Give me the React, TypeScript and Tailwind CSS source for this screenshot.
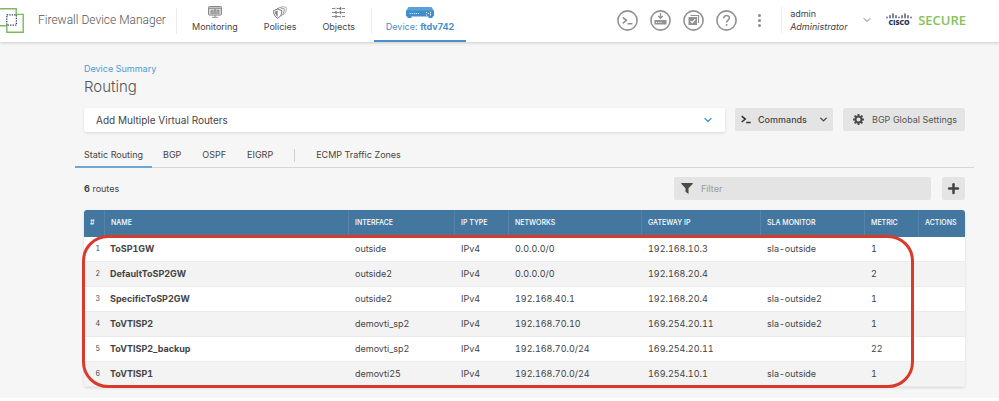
import type { ReactNode } from 'react'
import { ChevronDown, Plus } from 'lucide-react'

interface Route {
  name: string
  iface: string
  ipType: string
  network: string
  gateway: string
  sla: string
  metric: number
}

const routes: Route[] = [
  { name: 'ToSP1GW', iface: 'outside', ipType: 'IPv4', network: '0.0.0.0/0', gateway: '192.168.10.3', sla: 'sla-outside', metric: 1 },
  { name: 'DefaultToSP2GW', iface: 'outside2', ipType: 'IPv4', network: '0.0.0.0/0', gateway: '192.168.20.4', sla: '', metric: 2 },
  { name: 'SpecificToSP2GW', iface: 'outside2', ipType: 'IPv4', network: '192.168.40.1', gateway: '192.168.20.4', sla: 'sla-outside2', metric: 1 },
  { name: 'ToVTISP2', iface: 'demovti_sp2', ipType: 'IPv4', network: '192.168.70.10', gateway: '169.254.20.11', sla: 'sla-outside2', metric: 1 },
  { name: 'ToVTISP2_backup', iface: 'demovti_sp2', ipType: 'IPv4', network: '192.168.70.0/24', gateway: '169.254.20.11', sla: '', metric: 22 },
  { name: 'ToVTISP1', iface: 'demovti25', ipType: 'IPv4', network: '192.168.70.0/24', gateway: '169.254.10.1', sla: 'sla-outside', metric: 1 },
]

const columns = [
  { label: '#', width: 'w-5' },
  { label: 'NAME', width: '' },
  { label: 'INTERFACE', width: 'w-[106px]' },
  { label: 'IP TYPE', width: 'w-[54px]' },
  { label: 'NETWORKS', width: 'w-[133px]' },
  { label: 'GATEWAY IP', width: 'w-[119px]' },
  { label: 'SLA MONITOR', width: 'w-[104px]' },
  { label: 'METRIC', width: 'w-[54px]' },
  { label: 'ACTIONS', width: 'w-[47px]' },
]

const tabs = ['BGP', 'OSPF', 'EIGRP']

function ProductLogo() {
  return (
    <svg width="24" height="25" viewBox="0 0 24 25" fill="none" aria-hidden="true">
      <path d="M0 .8h16.2v5.6h7v17.8H6.8v-6.4H0" stroke="#7fb95f" strokeWidth="1.4" />
      <rect x="6.8" y="6.8" width="9.6" height="10.4" stroke="#2b3a63" strokeWidth="1.3" strokeDasharray="1.3 1.2" />
    </svg>
  )
}

function MonitoringIcon() {
  return (
    <svg width="14" height="12" viewBox="0 0 14 12" fill="none" aria-hidden="true">
      <rect x=".5" y=".5" width="13" height="8.6" rx=".8" fill="#d4d4d4" stroke="#8a8a8a" />
      <path d="M1 2.3h12M3.2 8V4.8h1.6V8M6.2 8V3.8h1.6V8M9.2 8V4.4h1.6V8" stroke="#777" strokeWidth=".8" />
      <path d="M7 9v2M4.2 11.3h5.6" stroke="#8a8a8a" />
    </svg>
  )
}

function PoliciesIcon() {
  return (
    <svg width="14" height="13" viewBox="0 0 14 13" fill="none" aria-hidden="true">
      <path d="M7.4 1.4 9.8.5l3.6 1.1c.1 3.3-.7 5.6-3.2 7.1" stroke="#999" strokeWidth=".8" />
      <path d="M4 2.7 6.9 1.6l4.3 1.3c.1 3.4-.9 5.9-3.3 7.4" stroke="#888" strokeWidth=".9" />
      <path d="M.6 4.5 4.7 3.1l4.1 1.4c.1 3.8-1.2 6.2-4.1 7.8C1.8 10.7.5 8.3.6 4.5Z" fill="#fff" stroke="#777" />
      <path d="M4.7 4.6v6.1C2.8 9.6 2 8 2 5.5Z" fill="#888" />
    </svg>
  )
}

function ObjectsIcon() {
  return (
    <svg width="13" height="11" viewBox="0 0 13 11" fill="none" aria-hidden="true">
      <path d="M0 1.5h3M5 1.5h3M10 1.5h3M0 5.500h3M5 5.500h2.500M9.500 5.500H13M0 9.500h3M5 9.500h3M10 9.500h3" stroke="#888" />
      <path d="M4 4.200v2.600M8.500 4.200v2.600M8.500 .2v2.600M4 8.200v2.600" stroke="#666" strokeWidth="1.500" />
      <path d="M4 .500v2M8.500 8.500v2" stroke="#999" strokeWidth=".8" />
    </svg>
  )
}

function DeviceIcon() {
  return (
    <svg width="28" height="11" viewBox="0 0 28 11" aria-hidden="true">
      <path d="M2.500 0h23L28 4H0Z" fill="#5ba0d6" />
      <rect y="3.500" width="28" height="6" rx=".8" fill="#3f8dca" />
      <path d="M1.500 9h4v2h-4zM22.500 9h4v2h-4z" fill="#3f8dca" />
      <path d="M3.500 6.500h10" stroke="#d5e9f7" strokeWidth="1" strokeDasharray="1.200 .9" />
      <path d="M20.500 5v1M20.500 7.500v1M24.500 4.800v1.500M24.500 7v1.500M22.500 6v1" stroke="#fff" strokeWidth="1" />
    </svg>
  )
}

function RoundIcon({ label, children }: { label: string; children: ReactNode }) {
  return (
    <button type="button" aria-label={label}>
      <svg width="21" height="21" viewBox="0 0 21 21" fill="none" stroke="#919191" strokeWidth="1.600" aria-hidden="true">
        <circle cx="10.500" cy="10.500" r="9.600" />
        {children}
      </svg>
    </button>
  )
}

function PromptIcon() {
  return (
    <svg width="10" height="9" viewBox="0 0 10 9" fill="none" stroke="#333" strokeWidth="1.500" aria-hidden="true">
      <path d="m.7 1.200 3.600 2.900L.7 7M5.200 7.500h4.500" />
    </svg>
  )
}

function GearIcon() {
  return (
    <svg width="11" height="11" viewBox="0 0 11 11" fill="none" stroke="#4a4a4a" aria-hidden="true">
      <circle cx="5.500" cy="5.500" r="3" strokeWidth="2" />
      <path d="M5.500 0v2M5.500 9v2M0 5.500h2M9 5.500h2M1.600 1.600 3 3M8 8l1.400 1.400M9.400 1.600 8 3M3 8 1.600 9.400" strokeWidth="1.900" />
    </svg>
  )
}

function CiscoLogo() {
  return (
    <span className="flex w-[26px] flex-col items-center">
      <svg width="26" height="6" viewBox="0 0 26 6" fill="none" stroke="#26335c" strokeWidth="1.200" strokeLinecap="round" aria-hidden="true">
        <path d="M1 4v.8M4 2.600v2.200M7 .8v4M10 2.600v2.200M13 4v.8M16 2.600v2.200M19 .8v4M22 2.600v2.200M25 4v.8" />
      </svg>
      <span className="font-['Open_Sans',sans-serif] text-[7px] leading-[8px] font-extrabold text-[#26335c]">CISCO</span>
    </span>
  )
}

function NavLink({ icon, children }: { icon: ReactNode; children: ReactNode }) {
  return (
    <a href="#" className="flex flex-col items-center">
      <span className="flex h-[15px] items-center">{icon}</span>
      <span className="leading-[14px] whitespace-nowrap">{children}</span>
    </a>
  )
}

function Header() {
  return (
    <header className="relative flex h-[42px] items-center bg-white pb-0.5 shadow-[0_1px_3px_rgba(0,0,0,0.18)]">
      <ProductLogo />
      <span className="ml-3.5 w-[138px] font-[Roboto,sans-serif] text-[12px] font-light whitespace-nowrap text-[#555]">Firewall Device Manager</span>
      <nav className="-mb-0.5 flex h-[42px] items-center text-[9px] text-[#444]">
        <div className="h-[26px] border-l border-[#ececec]" />
        <div className="flex w-[194px] justify-between pr-4 pb-1 pl-[15px]">
          <NavLink icon={<MonitoringIcon />}>Monitoring</NavLink>
          <NavLink icon={<PoliciesIcon />}>Policies</NavLink>
          <NavLink icon={<ObjectsIcon />}>Objects</NavLink>
        </div>
        <div className="mr-[2px] h-[26px] border-l border-[#ececec]" />
        <div className="flex h-full w-[92px] flex-col justify-center border-b-2 border-[#4a8fc7] pb-0.5 text-[#4690c8]">
          <NavLink icon={<DeviceIcon />}>
            Device: <b className="font-bold">ftdv742</b>
          </NavLink>
        </div>
      </nav>
      <div className="ml-auto flex items-center gap-3">
        <RoundIcon label="CLI console">
          <path d="m5.800 7.300 3.600 3-3.600 3M10.500 13.700h5" />
        </RoundIcon>
        <RoundIcon label="Deployment">
          <path d="M10.500 3v5M8.200 6l2.300 2.300L12.800 6" strokeWidth="1.300" />
          <rect x="4.500" y="10" width="12" height="4.500" rx=".5" fill="#919191" stroke="none" />
          <path d="M6 12.300h6" stroke="#fff" strokeWidth="1" strokeDasharray="1 .8" />
        </RoundIcon>
        <RoundIcon label="Task list">
          <path d="M7.500 5.500h8v7.500" strokeWidth="1.200" />
          <rect x="5.500" y="7" width="8.500" height="8" fill="#919191" stroke="none" />
          <path d="m7.500 10.800 1.800 1.800 3-3.500" stroke="#fff" strokeWidth="1.200" />
        </RoundIcon>
        <RoundIcon label="Help">
          <path d="M7.800 8.200c0-3.600 5.600-3.500 5.600-.2 0 2-2.800 2.200-2.800 4.500M10.600 14v1.700" />
        </RoundIcon>
      </div>
      <button type="button" aria-label="More" className="ml-[21px] flex flex-col gap-0.5">
        <span className="size-[3px] rounded-full bg-[#8a8a8a]" />
        <span className="size-[3px] rounded-full bg-[#8a8a8a]" />
        <span className="size-[3px] rounded-full bg-[#8a8a8a]" />
      </button>
      <button type="button" className="ml-5 flex h-[26px] items-center border-l border-[#ececec] pl-2 text-left text-[9px] leading-[13px] text-[#444]">
        <span className="w-[71px]">
          <span className="block">admin</span>
          <span className="block italic">Administrator</span>
        </span>
        <ChevronDown size={12} strokeWidth={2} className="text-[#777]" />
      </button>
      <div className="mr-[33px] ml-[13px] flex items-center gap-1.5">
        <CiscoLogo />
        <span className="font-['Open_Sans',sans-serif] text-[13px] leading-4 font-semibold text-[#86c25a]">SECURE</span>
      </div>
    </header>
  )
}

function RoutesTable() {
  return (
    <div className="relative mt-2.5">
      <table className="w-full table-fixed border-separate border-spacing-0 overflow-hidden rounded-[3px] bg-white text-left shadow-[0_1px_3px_rgba(0,0,0,0.12)]">
        <thead>
          <tr className="h-[27px] bg-[#44779f] text-[7px] text-white">
            {columns.map((column) => (
              <th
                key={column.label}
                scope="col"
                className={`${column.width} border-l border-[#5684a8] px-1.5 font-medium whitespace-nowrap first:border-l-0`}
              >
                {column.label}
              </th>
            ))}
          </tr>
        </thead>
        <tbody className="text-[9px] leading-4 text-[#444] tabular-nums">
          {routes.map((route, index) => (
            <tr key={route.name} className="h-[25px] even:bg-[#f3f3f3]">
              <td className="border-b border-[#ebebeb] pr-1 text-right text-[7px]">{index + 1}</td>
              <td className="border-b border-[#ebebeb] px-1.5 font-bold">{route.name}</td>
              <td className="border-b border-[#ebebeb] px-[7px]">{route.iface}</td>
              <td className="border-b border-[#ebebeb] px-[7px]">{route.ipType}</td>
              <td className="border-b border-[#ebebeb] px-[7px]">{route.network}</td>
              <td className="border-b border-[#ebebeb] px-[7px]">{route.gateway}</td>
              <td className="border-b border-[#ebebeb] px-[7px]">{route.sla}</td>
              <td className="border-b border-[#ebebeb] px-[7px]">{route.metric}</td>
              <td className="border-b border-[#ebebeb] px-[7px]" />
            </tr>
          ))}
        </tbody>
      </table>
      {/* Highlight around the configured routes */}
      <div className="pointer-events-none absolute top-[25px] right-[51px] -bottom-px -left-0.5 rounded-[26px] border-3 border-[#d93a2b]" />
    </div>
  )
}

export default function App() {
  return (
    <div className="bg-white pb-[3px] font-[Inter,'Liberation_Sans',sans-serif] text-[#444]">
      <div className="bg-[#f6f6f6]">
        <Header />
        <main className="pt-[19px] pr-[34px] pb-[11px] pl-[84px]">
          <a href="#" className="block text-[9px] leading-4 text-[#4e9bd3]">Device Summary</a>
          <h1 className="text-[15px] leading-5 font-light text-[#555]">Routing</h1>

          <div className="mt-[11px] flex items-start">
            <button
              type="button"
              className="flex h-6 flex-1 items-center justify-between rounded-xs bg-white pr-[11px] pl-3 text-[10px] shadow-[0_1px_3px_rgba(0,0,0,0.12)]"
            >
              Add Multiple Virtual Routers
              <ChevronDown size={12} strokeWidth={3} className="text-[#4e9bd3]" />
            </button>
            <button type="button" className="ml-2.5 flex h-[23px] w-[98px] items-center rounded-xs bg-[#e4e4e4] pr-1 pl-1.5 text-[9px] font-medium">
              <PromptIcon />
              <span className="mr-auto ml-[7px]">Commands</span>
              <ChevronDown size={11} strokeWidth={3} />
            </button>
            <button type="button" className="ml-2.5 flex h-[23px] w-[122px] items-center gap-2 rounded-xs bg-[#e4e4e4] pl-2.5 text-[9px] whitespace-nowrap text-[#555]">
              <GearIcon />
              BGP Global Settings
            </button>
          </div>

          <nav className="-mr-[9px] -ml-[9px] mt-[11px] flex h-[25px] border-b border-[#d6d6d6] text-[9px]">
            <a href="#" className="-mb-px flex w-[77px] items-center justify-center border-b-2 border-[#6ba7d6] whitespace-nowrap">
              Static Routing
            </a>
            <div className="ml-[11px] flex items-center gap-[21px]">
              {tabs.map((tab) => (
                <a key={tab} href="#">{tab}</a>
              ))}
              <span className="h-[13px] border-l border-[#cfcfcf]" />
              <a href="#">ECMP Traffic Zones</a>
            </div>
          </nav>

          <div className="mt-[9px] flex h-[23px] items-center">
            <p className="flex-1 text-[9px]">
              <b>6</b> routes
            </p>
            <div className="flex h-full w-[257px] items-center gap-2 rounded-xs bg-[#e4e4e4] px-[7px]">
              <svg width="12" height="11" viewBox="0 0 12 11" fill="#4a4a4a" aria-hidden="true">
                <path d="M.8 0h10.400c.6 0 .8.7.4 1.100L7.500 5.300V11L4.500 8.800V5.300L.4 1.100C0 .7.2 0 .8 0Z" />
              </svg>
              <input
                type="text"
                aria-label="Filter"
                placeholder="Filter"
                className="min-w-0 flex-1 bg-transparent text-[9px] outline-none placeholder:text-[#999]"
              />
            </div>
            <button type="button" aria-label="Add route" className="ml-[11px] flex size-[23px] items-center justify-center rounded-xs bg-[#e4e4e4]">
              <Plus size={15} strokeWidth={4} />
            </button>
          </div>

          <RoutesTable />
        </main>
      </div>
    </div>
  )
}
